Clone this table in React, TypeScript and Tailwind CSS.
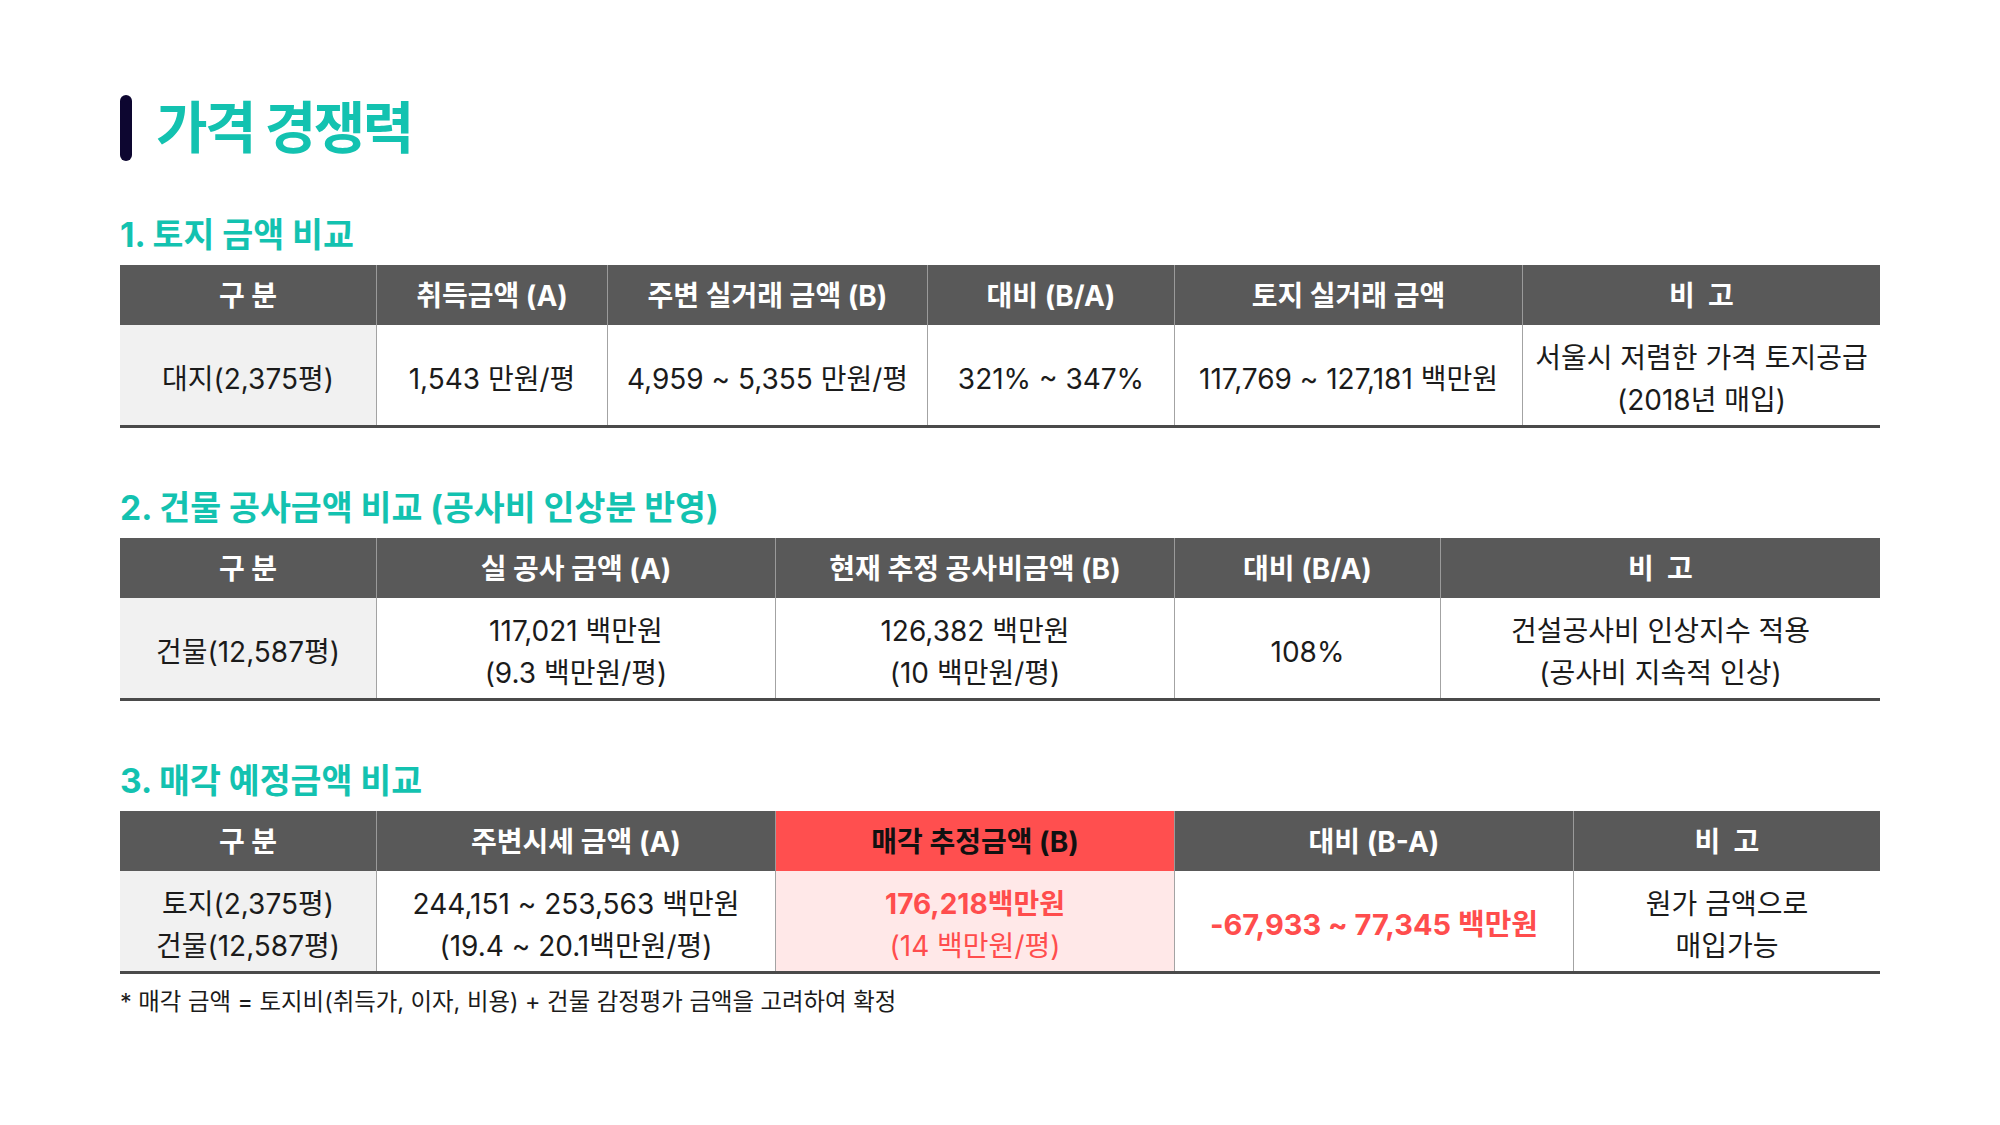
import React from 'react';

type Cell = {
  lines: string[];
  tone?: 'label' | 'plain' | 'red' | 'redBold';
};

type Table = {
  cols: string;
  head: { text: string; red?: boolean }[];
  body: Cell[];
};

const tables: { title: string; table: Table }[] = [
  {
    title: '1. 토지 금액 비교',
    table: {
      cols: 'grid-cols-[256px_231px_320px_247px_348px_358px]',
      head: [
        { text: '구 분' },
        { text: '취득금액 (A)' },
        { text: '주변 실거래 금액 (B)' },
        { text: '대비 (B/A)' },
        { text: '토지 실거래 금액' },
        { text: '비  고' },
      ],
      body: [
        { lines: ['대지(2,375평)'], tone: 'label' },
        { lines: ['1,543 만원/평'] },
        { lines: ['4,959 ~ 5,355 만원/평'] },
        { lines: ['321% ~ 347%'] },
        { lines: ['117,769 ~ 127,181 백만원'] },
        { lines: ['서울시 저렴한 가격 토지공급', '(2018년 매입)'] },
      ],
    },
  },
  {
    title: '2. 건물 공사금액 비교 (공사비 인상분 반영)',
    table: {
      cols: 'grid-cols-[256px_399px_399px_266px_440px]',
      head: [
        { text: '구 분' },
        { text: '실 공사 금액 (A)' },
        { text: '현재 추정 공사비금액 (B)' },
        { text: '대비 (B/A)' },
        { text: '비  고' },
      ],
      body: [
        { lines: ['건물(12,587평)'], tone: 'label' },
        { lines: ['117,021 백만원', '(9.3 백만원/평)'] },
        { lines: ['126,382 백만원', '(10 백만원/평)'] },
        { lines: ['108%'] },
        { lines: ['건설공사비 인상지수 적용', '(공사비 지속적 인상)'] },
      ],
    },
  },
  {
    title: '3. 매각 예정금액 비교',
    table: {
      cols: 'grid-cols-[256px_399px_399px_399px_307px]',
      head: [
        { text: '구 분' },
        { text: '주변시세 금액 (A)' },
        { text: '매각 추정금액 (B)', red: true },
        { text: '대비 (B-A)' },
        { text: '비  고' },
      ],
      body: [
        { lines: ['토지(2,375평)', '건물(12,587평)'], tone: 'label' },
        { lines: ['244,151 ~ 253,563 백만원', '(19.4 ~ 20.1백만원/평)'] },
        { lines: ['176,218백만원', '(14 백만원/평)'], tone: 'red' },
        { lines: ['-67,933 ~ 77,345 백만원'], tone: 'redBold' },
        { lines: ['원가 금액으로', '매입가능'] },
      ],
    },
  },
];

function CompareTable({ table }: { table: Table }) {
  return (
    <div className="border-b-[3px] border-[#4a4a4a]">
      <div className={`grid ${table.cols}`}>
        {table.head.map((h, i) => (
          <div
            key={i}
            className={`flex h-[60px] items-center justify-center whitespace-pre pt-[2px] text-[28px] font-bold ${
              h.red ? 'bg-[#ff4f4f] text-[#111]' : 'bg-[#595959] text-white'
            } ${i > 0 ? 'border-l border-[#9a9a9a]' : ''}`}
          >
            {h.text}
          </div>
        ))}
        {table.body.map((c, i) => {
          const bg =
            c.tone === 'label' ? 'bg-[#f1f1f1]' : c.tone === 'red' ? 'bg-[#ffe8e8]' : 'bg-white';
          return (
            <div
              key={i}
              className={`flex h-[100px] flex-col items-center justify-center whitespace-nowrap pt-[8px] text-center text-[28px] leading-[42px] ${bg} ${
                i > 0 ? 'border-l border-[#a3a3a3]' : ''
              } ${c.tone === 'red' || c.tone === 'redBold' ? 'text-[#ff4d4d]' : 'text-[#1b1b1b]'} ${
                c.tone === 'redBold' ? 'text-[29px] font-bold' : ''
              }`}
            >
              {c.lines.map((l, j) => (
                <span key={j} className={c.tone === 'red' && j === 0 ? 'font-bold' : ''}>
                  {l}
                </span>
              ))}
            </div>
          );
        })}
      </div>
    </div>
  );
}

export default function App() {
  return (
    <div className="h-[1125px] w-[2000px] bg-white px-[120px] pt-[95px] font-['Inter','Noto_Sans_CJK_KR',sans-serif]">
      {/* Page title */}
      <div className="flex h-[66px] items-center gap-[24px]">
        <div className="h-[66px] w-[12px] rounded-full bg-[#0d0630]" />
        <h1 className="text-[56px] font-bold leading-none tracking-[-0.045em] text-[#13c2b0]">가격 경쟁력</h1>
      </div>

      {tables.map((t, i) => (
        <section key={i} className={i === 0 ? 'mt-[54px]' : 'mt-[60px]'}>
          <h2 className="mb-[10px] text-[33.6px] font-bold leading-[40px] text-[#13c2b0]">{t.title}</h2>
          <CompareTable table={t.table} />
        </section>
      ))}

      <p className="mt-[12px] text-[23.4px] leading-[32px] text-[#1b1b1b]">
        * 매각 금액 = 토지비(취득가, 이자, 비용) + 건물 감정평가 금액을 고려하여 확정
      </p>
    </div>
  );
}
